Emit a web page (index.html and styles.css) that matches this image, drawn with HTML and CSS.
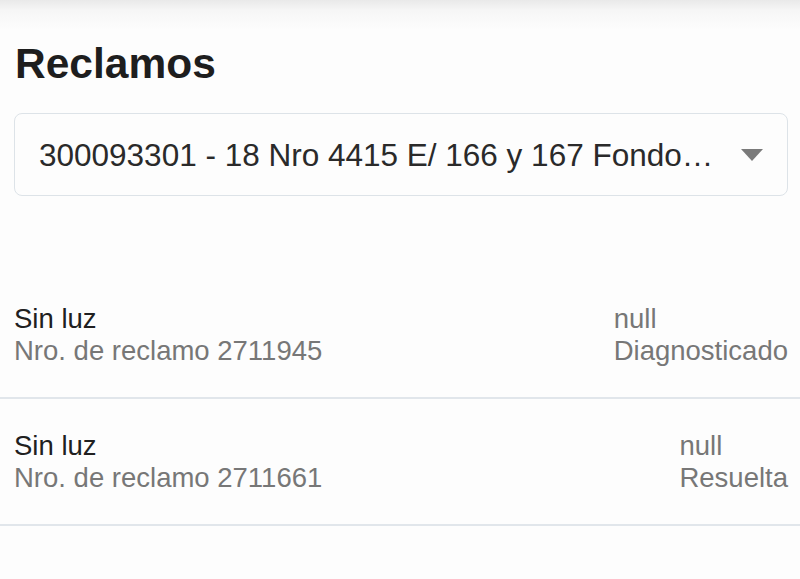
FILE: index.html
```html
<!DOCTYPE html>
<html lang="es">
<head>
<meta charset="utf-8">
<title>Reclamos</title>
<link rel="stylesheet" href="styles.css">
</head>
<body>
<div class="appbar-shadow"></div>
<main class="page">
  <h1 class="title">Reclamos</h1>
  <div class="select">
    <span class="select-text">300093301 - 18 Nro 4415 E/ 166 y 167 Fondo Barrio Norte</span>
    <svg class="select-arrow" width="22" height="12" viewBox="0 0 22 12"><path d="M0 0H22L11 12Z" fill="#7a7a7a"/></svg>
  </div>
  <ul class="list">
    <li class="row">
      <div class="row-main">
        <div class="row-title">Sin luz</div>
        <div class="row-sub">Nro. de reclamo 2711945</div>
      </div>
      <div class="row-side">
        <div>null</div>
        <div>Diagnosticado</div>
      </div>
    </li>
    <li class="row">
      <div class="row-main">
        <div class="row-title">Sin luz</div>
        <div class="row-sub">Nro. de reclamo 2711661</div>
      </div>
      <div class="row-side">
        <div>null</div>
        <div>Resuelta</div>
      </div>
    </li>
  </ul>
</main>
</body>
</html>
```

FILE: styles.css
```css
html, body {
  margin: 0;
  padding: 0;
  background: #fdfdfd;
  font-family: "Liberation Sans", Arial, sans-serif;
  overflow: hidden;
}

.appbar-shadow {
  height: 30px;
  background: linear-gradient(to bottom, #e9e9e9 0%, #f6f6f6 35%, #fdfdfd 100%);
}

.page {
  padding: 0 12px 0 14px;
}

.title {
  margin: 10px 0 0 1px;
  font-size: 42.5px;
  line-height: 48px;
  font-weight: bold;
  color: #1e1e1e;
}

.select {
  margin-top: 25px;
  height: 81px;
  border: 1.5px solid #dde3e8;
  border-radius: 8px;
  background: #fdfdfd;
  display: flex;
  align-items: center;
  padding: 0 24px 0 24px;
  gap: 21px;
}

.select-text {
  flex: 1;
  min-width: 0;
  white-space: nowrap;
  overflow: hidden;
  text-overflow: ellipsis;
  font-size: 31.5px;
  color: #2a2a2a;
  position: relative;
  top: 1px;
}

.select-arrow {
  flex: none;
}

.list {
  list-style: none;
  margin: 75px 0 0 0;
  padding: 0;
}

.row {
  display: flex;
  justify-content: space-between;
  padding: 32px 12px 30px 14px;
  margin: 0 -12px 0 -14px;
  border-bottom: 2px solid #e1e6eb;
  font-size: 27.5px;
  line-height: 32px;
}

.row + .row {
  padding-top: 31px;
}

.row-title {
  color: #202020;
}

.row-sub,
.row-side {
  color: #777777;
}
```
